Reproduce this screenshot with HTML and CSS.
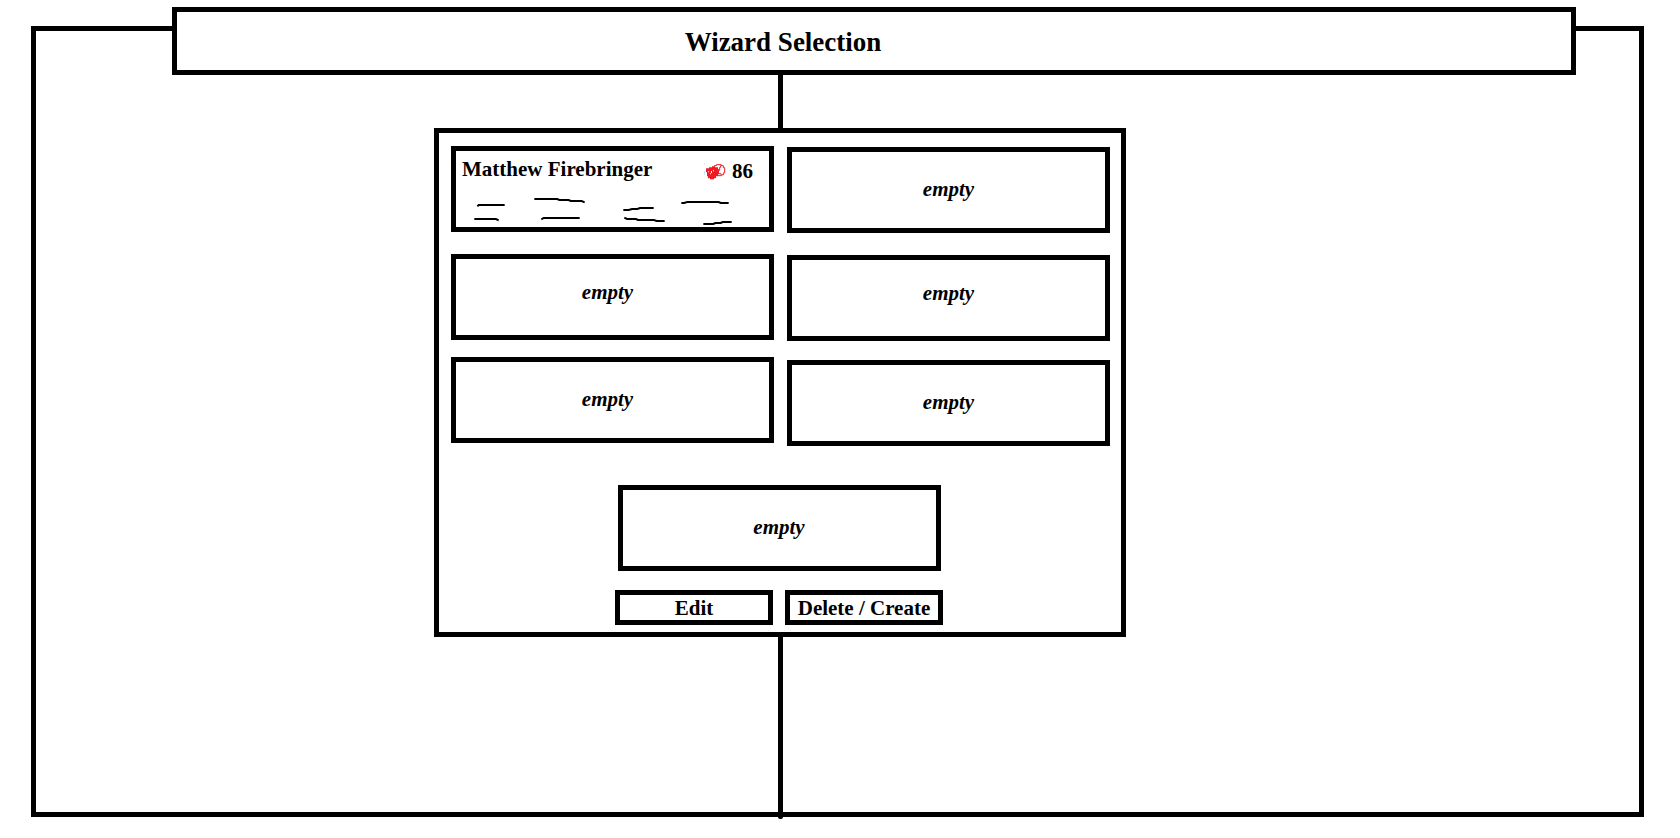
FILE: index.html
```html
<!DOCTYPE html>
<html lang="en">
<head>
<meta charset="utf-8">
<meta name="viewport" content="width=device-width, initial-scale=1">
<title>Wizard Selection</title>
<link rel="stylesheet" href="styles.css">
</head>
<body>
<div class="page">
  <div class="frame"></div>
  <header class="banner"><h1 class="title">Wizard Selection</h1></header>
  <main class="content">
    <div class="rod rod-top"></div>
    <section class="panel">
      <div class="columns">
        <div class="column column-left">
          <button class="slot slot-filled" type="button">
            <span class="slot-head">
              <span class="name">Matthew Firebringer</span>
              <span class="level">
                <svg class="school" viewBox="12 14 66 51" aria-hidden="true">
                  <path d="M13.500 14v4M13.500 38v12" stroke="#a5def7" stroke-width="2"/>
                  <path d="M18 36V30H27V27H36V24H45V27H54V33H57V48H54V54H48V60H42V63H30V60H24V54H21V42H18Z" fill="#ed1c24"/>
                  <path d="M43 25V22H49V19H64V22H70V28H74V43H71V49H65V52H54M62 21V27H59V36H55M57 46H63V49" fill="none" stroke="#ed1c24" stroke-width="3"/>
                  <path d="M24 39h3v3h-3zM33 38h3v6h-3zM39 36h3v3h-3zM30 45h3v3h-3z" fill="#fff"/>
                </svg>
                <span>86</span>
              </span>
            </span>
            <svg class="stats" viewBox="78 225 939 96" aria-hidden="true">
              <path d="M142 259L146 255H224M313 237H382L388 240H416L422 243H455L464 247M133 297H198L206 301M334 298L341 294H449M580 270H596L606 267H622L630 264H671M583 293L591 297H618L624 300H672L680 303H704M754 249H762L772 246H866L872 249H896M820 312H850L856 309H872L878 306H905"/>
            </svg>
          </button>
          <button class="slot slot-middle" type="button">empty</button>
          <button class="slot" type="button">empty</button>
        </div>
        <div class="column column-right">
          <button class="slot" type="button">empty</button>
          <button class="slot slot-middle" type="button">empty</button>
          <button class="slot" type="button">empty</button>
        </div>
      </div>
      <div class="footer">
        <button class="slot slot-last" type="button">empty</button>
        <div class="actions">
          <button class="action" type="button">Edit</button>
          <button class="action" type="button">Delete / Create</button>
        </div>
      </div>
    </section>
    <div class="rod rod-bottom"></div>
  </main>
</div>
</body>
</html>
```
FILE: styles.css
```css
* {
  box-sizing: border-box;
}

body {
  margin: 0;
  background: #fff;
  color: #000;
  font: bold 21px/24px "Liberation Serif", "Times New Roman", serif;
}

button {
  margin: 0;
  padding: 0;
  border: 5px solid #000;
  border-radius: 0;
  background: #fff;
  color: inherit;
  font: inherit;
  cursor: pointer;
}

.page {
  display: grid;
  grid-template-columns: 141fr 1404fr 68fr;
  grid-template-rows: 19px 49px 1fr;
  min-height: 100vh;
  padding: 7px 36px 21px 31px;
}

.frame {
  grid-column: 1 / -1;
  grid-row: 2 / -1;
  border: 5px solid #000;
}

.banner {
  grid-column: 2;
  grid-row: 1 / 3;
  display: flex;
  align-items: center;
  justify-content: center;
  padding: 2px 182px 0 0;
  border: 5px solid #000;
  background: #fff;
}

.title {
  margin: 0;
  font-size: 27px;
  line-height: 32px;
}

.content {
  grid-column: 1 / -1;
  grid-row: 3;
  display: flex;
  flex-direction: column;
  align-items: center;
  padding-right: 115px;
}

.rod {
  width: 5px;
  background: #000;
}

.rod-top {
  height: 53px;
}

/* The lower rod pokes slightly through the frame. */
.rod-bottom {
  flex: 1;
  margin-bottom: -2px;
  border-radius: 0 0 2px 2px;
}

.panel {
  width: 692px;
  max-width: 100%;
  padding: 13px 11px 7px 12px;
  border: 5px solid #000;
  background: #fff;
}

.columns {
  display: grid;
  grid-template-columns: 1fr 1fr;
  gap: 13px;
}

.column {
  display: flex;
  flex-direction: column;
}

.column-left {
  gap: 17px;
}

.column-left .slot:first-child {
  margin-bottom: 5px;
}

.column-left .slot:not(.slot-filled) {
  padding-right: 10px;
}

.column-right {
  gap: 19px;
  padding-top: 1px;
}

.column-right .slot:first-child {
  margin-bottom: 3px;
}

.slot {
  min-height: 86px;
  padding-bottom: 2px;
  font-style: italic;
}

.slot-middle {
  padding-bottom: 10px;
}

.slot-filled {
  display: flex;
  flex-direction: column;
  justify-content: space-between;
  padding-bottom: 0;
  font-style: normal;
}

.slot-head {
  display: flex;
  justify-content: space-between;
  align-self: stretch;
  padding: 6px 16px 0 6px;
}

.level {
  display: flex;
  align-items: center;
  gap: 6px;
  padding-top: 2px;
}

.school {
  width: 22px;
  height: 17px;
}

.stats {
  display: block;
  width: 100%;
  height: 32px;
  fill: none;
  stroke: #000;
  stroke-width: 6;
}

.footer {
  display: flex;
  flex-direction: column;
  align-items: center;
  gap: 19px;
  padding: 39px 3px 0 0;
}

.slot-last {
  width: 323px;
}

.actions {
  display: flex;
  gap: 12px;
}

.action {
  width: 158px;
  min-height: 35px;
  white-space: nowrap;
}
```
